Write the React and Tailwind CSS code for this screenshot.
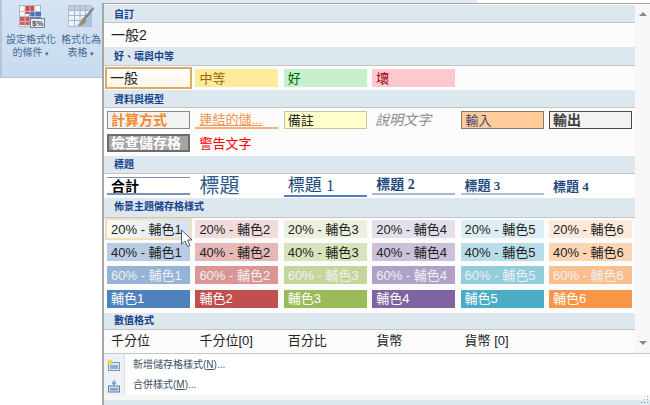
import React from "react";

const cjk = "font-['Liberation_Sans','Noto_Sans_CJK_TC',sans-serif]";
const serif = "font-['Liberation_Serif','Noto_Sans_CJK_TC',serif]";

function Header({ children, className = "" }) {
  return (
    <div className={`flex items-center pl-[10px] bg-[#dde7ee] border-b border-[#c5c5c5] text-[10px] font-bold text-[#15428b] ${className}`}>
      {children}
    </div>
  );
}

function Cell({ children, className = "" }) {
  return <div className={`h-[18px] flex items-center whitespace-nowrap overflow-hidden pl-[4px] text-[13px] leading-none ${className}`}>{children}</div>;
}

const themeRows = [
  { prefix: "20% - 輔色", text: "text-[#222222]", bg: ["bg-gradient-to-r from-[#fbfaf4] to-[#d5e2f0] ring-2 ring-[#f1e0b4]", "bg-[#f2dcdb]", "bg-[#ebf1de]", "bg-[#e4dfec]", "bg-[#daeef3]", "bg-[#fde9d9]"] },
  { prefix: "40% - 輔色", text: "text-[#222222]", bg: ["bg-[#b8cce4]", "bg-[#e6b8b7]", "bg-[#d8e4bc]", "bg-[#ccc0da]", "bg-[#b7dee8]", "bg-[#fcd5b4]"] },
  { prefix: "60% - 輔色", text: "text-[#f0f0f0]", bg: ["bg-[#95b3d7]", "bg-[#da9694]", "bg-[#c4d79b]", "bg-[#b1a0c7]", "bg-[#92cddc]", "bg-[#fabf8f]"] },
  { prefix: "輔色", text: "text-white", bg: ["bg-[#4f81bd]", "bg-[#c0504d]", "bg-[#9bbb59]", "bg-[#8064a2]", "bg-[#4bacc6]", "bg-[#f79646]"] },
];

function CondIcon() {
  return (
    <svg width="26" height="23" viewBox="0 0 26 23" className="block">
      <rect x="0.5" y="0.5" width="21" height="21" fill="#f6f7fa" stroke="#a9b5c8" />
      <rect x="6" y="1" width="9" height="8" fill="#e0433d" />
      <rect x="10" y="7" width="12" height="6" fill="#4a72b8" />
      <rect x="1" y="12" width="10" height="8" fill="#e0554e" />
      <path d="M1 6.5h21M1 11.5h21M1 16.5h21M6 1v21M11 1v21M16 1v21" stroke="#b4bfd0" strokeWidth="1" />
      <rect x="11.5" y="13.5" width="14" height="9" fill="#e8eaed" stroke="#79838f" />
      <text x="13" y="21" fontSize="8" fontWeight="700" fill="#444b55" fontFamily="Liberation Sans">$%</text>
    </svg>
  );
}

function TableIcon() {
  return (
    <svg width="26" height="23" viewBox="0 0 26 23" className="block">
      <rect x="0.5" y="0.5" width="23" height="21" fill="#eef3f9" stroke="#aebdd0" />
      <rect x="1" y="1" width="22" height="4" fill="#c3ccd8" />
      <path d="M8 21 L23 7 L23 21 Z" fill="#a9c4e6" />
      <path d="M1 5.5h23M1 10.5h23M1 15.5h23M6.5 1v21M12 1v21M17.5 1v21" stroke="#a4b6cc" strokeWidth="1" />
      <path d="M25.5 2 L16 12 L18 14 L26 4 Z" fill="#78838d" />
      <path d="M16 12 C13 14 13 18 10 21 C15 21 18 18 18 14 Z" fill="#9a8f62" />
    </svg>
  );
}

function NewStyleIcon() {
  return (
    <svg width="14" height="13" viewBox="0 0 14 13" className="block">
      <rect x="1.5" y="3.5" width="11" height="8" fill="#d8e6f5" stroke="#7d97b8" />
      <rect x="3" y="6" width="8" height="4" fill="#8fb0d6" />
      <circle cx="3" cy="3" r="2.6" fill="#f4d35e" />
    </svg>
  );
}

function MergeIcon() {
  return (
    <svg width="14" height="14" viewBox="0 0 14 14" className="block">
      <path d="M7 1v4M5 3l2 3 2-3" stroke="#6f8fb3" strokeWidth="1.2" fill="none" />
      <rect x="1.5" y="7" width="11" height="6" fill="#cfe0f3" stroke="#5c7ea6" />
      <rect x="3" y="9" width="8" height="2.5" fill="#7fa4cf" />
    </svg>
  );
}

export default function App() {
  return (
    <div className={`relative w-[650px] h-[405px] overflow-hidden bg-white ${cjk}`}>
      <div className="absolute left-[102px] top-0 w-[375px] h-[3px] bg-[#dfe8f3]" />
      <div className="absolute left-0 top-0 w-[106px] h-[78px] bg-gradient-to-b from-[#d6e4f3] to-[#c8dbef] border-b border-l-2 border-[#b4c7de] flex pt-[5px]">
        <div className="w-[58px] flex flex-col items-center">
          <div className="ml-[2px]"><CondIcon /></div>
          <div className="mt-[5px] text-[10px] leading-[13px] text-center text-[#4a6a95] whitespace-nowrap">設定格式化<br />的條件 <span className="text-[7px]">▾</span></div>
        </div>
        <div className="w-[42px] flex flex-col items-center">
          <TableIcon />
          <div className="mt-[5px] text-[10px] leading-[13px] text-center text-[#4a6a95] whitespace-nowrap">格式化為<br />表格 <span className="text-[7px]">▾</span></div>
        </div>
      </div>

      <div className="absolute left-[102px] top-[3px] w-[548px] h-[402px] bg-white border-t border-l-2 border-[#a6a6a6] flex flex-col">
        <div className="flex h-[349px]">
          <div className="w-[531px] flex flex-col pt-px">
            <Header className="h-[18px] pt-px">自訂</Header>
            <div className="h-[24px] bg-[#fcfcfc] flex items-center pl-[7px] text-[14px] text-[#222222]">一般2</div>

            <Header className="h-[19px]">好、壞與中等</Header>
            <div className="h-[24px] bg-[#fcfcfc] pl-[3px] pr-[3px] grid grid-cols-6 gap-x-[5.4px] items-center">
              <Cell className="!h-[22px] -mx-[2px] bg-gradient-to-b from-white to-[#fdf7e6] border-2 border-[#d9ad68] text-[14px] text-[#222222] !pl-[3px]">一般</Cell>
              <Cell className="bg-[#ffeb9c] text-[#9c6500]">中等</Cell>
              <Cell className="bg-[#c6efce] text-[#006100]">好</Cell>
              <Cell className="bg-[#ffc7ce] text-[#9c0006]">壞</Cell>
            </div>

            <Header className="h-[18px] pt-px">資料與模型</Header>
            <div className="h-[48px] bg-[#fcfcfc] pl-[3px] pr-[3px] pt-[3px] grid grid-cols-6 gap-x-[5.4px] gap-y-[5px] content-start">
              <Cell className="bg-[#f2f2f2] border border-[#8a8a8a] font-bold text-[14px] text-[#f58a2c] !pl-[3px]">計算方式</Cell>
              <Cell className="border-b-2 border-[#f6b27a] text-[#f0934a] underline">連結的儲...</Cell>
              <Cell className="bg-[#ffffcc] border border-[#c4c4a8] text-[#222222] !pl-[3px]">備註</Cell>
              <Cell className="italic text-[14px] text-[#8a8a8a] !pl-[3px]">說明文字</Cell>
              <Cell className="bg-[#ffcc99] border border-[#8a7a6a] text-[#3f3f76]">輸入</Cell>
              <Cell className="bg-[#f2f2f2] border border-[#4a4a4a] font-bold text-[14px] text-[#3f3f3f] !pl-[3px]">輸出</Cell>
              <Cell className="bg-[#a5a5a5] border-2 border-[#6d6d6d] font-bold text-[14px] text-white !pl-[2px]">檢查儲存格</Cell>
              <Cell className="text-[#ff0000]">警告文字</Cell>
            </div>

            <Header className="h-[18px]">標題</Header>
            <div className="h-[24px] bg-white pl-[3px] pr-[3px] grid grid-cols-6 gap-x-[5.4px] items-center text-[#1f497d]">
              <Cell className="border-t border-b-2 border-[#7a93b5] font-bold text-[14px] text-black">合計</Cell>
              <Cell className={`${serif} text-[20px] !h-[24px] text-[#2f5a8a]`}>標題</Cell>
              <Cell className={`${serif} border-b-2 border-[#4f81bd] text-[17px] !h-[22px]`}>標題 1</Cell>
              <Cell className={`${serif} border-b-2 border-[#a8b8c8] font-bold text-[14px]`}>標題 2</Cell>
              <Cell className={`${serif} border-b-2 border-[#a9c0d8] font-bold`}>標題 3</Cell>
              <Cell className={`${serif} font-bold`}>標題 4</Cell>
            </div>

            <Header className="h-[20px] pb-[2px]">佈景主題儲存格樣式</Header>
            <div className="h-[95px] bg-[#fcfcfc] pl-[3px] pr-[3px] pt-[2px] grid grid-cols-6 gap-x-[5.4px] gap-y-[5.2px] content-start">
              {themeRows.flatMap((row) =>
                row.bg.map((bg, i) => (
                  <Cell key={row.prefix + i} className={`${bg} ${row.text} text-[12.5px]`}>
                    {row.prefix}{i + 1}
                  </Cell>
                ))
              )}
            </div>

            <Header className="h-[17px] pb-[2px]">數值格式</Header>
            <div className="h-[23px] bg-[#fcfcfc] pl-[3px] pr-[3px] pb-[2px] grid grid-cols-6 gap-x-[5.4px] items-center text-[#222222]">
              <Cell>千分位</Cell>
              <Cell>千分位[0]</Cell>
              <Cell>百分比</Cell>
              <Cell>貨幣</Cell>
              <Cell>貨幣 [0]</Cell>
            </div>
          </div>
          <div className="w-[15px] bg-[#f7f7f7] flex flex-col justify-between items-center py-[8px]">
            <div className="w-0 h-0 border-x-[4px] border-x-transparent border-b-[4px] border-b-[#7f8a96]" />
            <div className="w-0 h-0 border-x-[4px] border-x-transparent border-t-[4px] border-t-[#7f8a96]" />
          </div>
        </div>

        <div className="h-[42px] border-t border-[#c5c5c5] flex">
          <div className="w-[21px] bg-[#eef2f6] border-r border-[#d8dde3] flex flex-col items-center gap-[7px] pt-[5px]">
            <NewStyleIcon />
            <MergeIcon />
          </div>
          <div className="flex flex-col pl-[8px] pt-px text-[10px] leading-[20px] text-[#3c4f66]">
            <div>新增儲存格樣式(<span className="underline">N</span>)...</div>
            <div>合併樣式(<span className="underline">M</span>)...</div>
          </div>
        </div>

        <div className="h-[5px] bg-[#f6f6f6]" />
        <div className="flex-1 bg-[#dde7ee] border-t border-[#e8e8e8]" />
      </div>

      <svg width="9" height="9" viewBox="0 0 9 9" className="absolute right-[1px] bottom-[1px]">
        <path d="M7 1h1v1H7zM7 4h1v1H7zM4 4h1v1H4zM7 7h1v1H7zM4 7h1v1H4zM1 7h1v1H1z" fill="#8a97a5" />
      </svg>

      <svg width="14" height="19" viewBox="0 0 14 19" className="absolute left-[180px] top-[229px]">
        <path d="M1.5 1 L1.5 15 L5 12 L7.5 17.5 L10 16.3 L7.5 11 L12 11 Z" fill="#ffffff" stroke="#4d5a68" strokeWidth="1" />
      </svg>
    </div>
  );
}
